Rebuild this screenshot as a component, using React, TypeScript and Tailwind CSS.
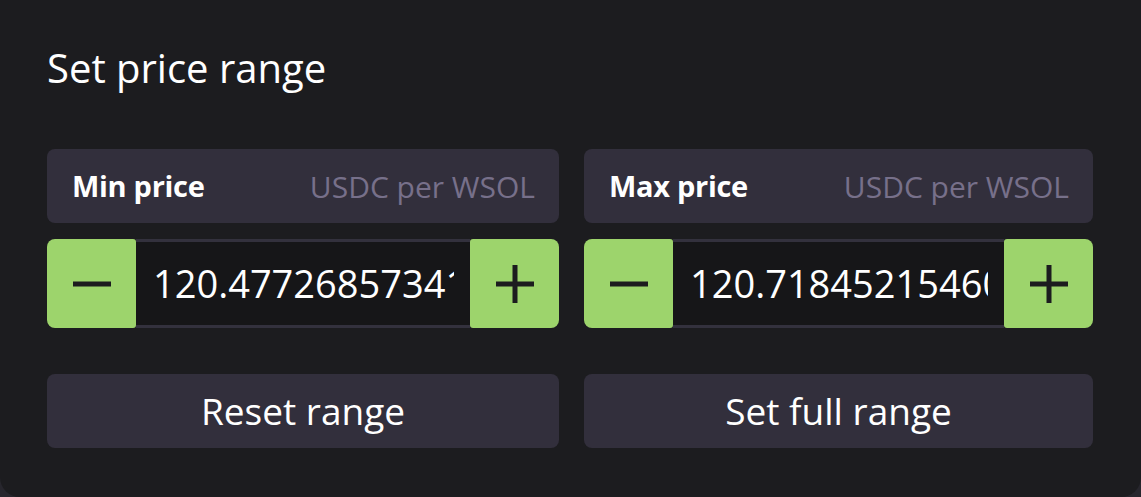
import { useState } from "react";

const font = { fontFamily: '"Open Sans", "Noto Sans", sans-serif' };

function Minus() {
  return (
    <svg width="40" height="40" viewBox="0 0 40 40">
      <rect x="1" y="17.5" width="38" height="5" fill="#1c1c1f" />
    </svg>
  );
}

function Plus() {
  return (
    <svg width="40" height="40" viewBox="0 0 40 40">
      <rect x="1" y="17.5" width="38" height="5" fill="#1c1c1f" />
      <rect x="17.5" y="1" width="5" height="38" fill="#1c1c1f" />
    </svg>
  );
}

function PriceInput({ label, value }: { label: string; value: string }) {
  const [val, setVal] = useState(value);
  return (
    <div className="flex min-w-0 flex-col">
      <div className="h-[74px] rounded-lg bg-[#322f3c] flex items-center justify-between pl-[25px] pr-[24px]">
        <span className="text-[29px] font-bold text-white tracking-[-0.3px]">{label}</span>
        <span className="text-[30px] text-[#77708a]">USDC per WSOL</span>
      </div>
      <div className="mt-[16px] flex h-[89px]">
        <button className="w-[89px] shrink-0 bg-[#9dd46c] rounded-l-lg rounded-r-[3px] flex items-center justify-center">
          <Minus />
        </button>
        <input
          value={val}
          size={1}
          onChange={(e) => setVal(e.target.value)}
          className="w-0 min-w-0 flex-1 bg-[#161618] border-y-[3px] border-[#33313d] pl-[17px] pr-[16px] text-[38px] text-white outline-none"
          style={font}
        />
        <button className="w-[89px] shrink-0 bg-[#9dd46c] rounded-r-lg rounded-l-[3px] flex items-center justify-center">
          <Plus />
        </button>
      </div>
    </div>
  );
}

export default function App() {
  return (
    <div className="w-[1141px] h-[497px] bg-[#27262d]" style={font}>
      <div className="h-full bg-[#1c1c1f] rounded-b-[20px] pl-[47px] pr-[48px] pt-[40px]">
        <h1 className="text-[40px] leading-[56px] text-white">Set price range</h1>
        <div className="mt-[53px] grid grid-cols-[512px_minmax(0,1fr)] gap-x-[25px]">
          <PriceInput label="Min price" value="120.47726857341234" />
          <PriceInput label="Max price" value="120.71845215460123" />
        </div>
        <div className="mt-[46px] grid grid-cols-[512px_minmax(0,1fr)] gap-x-[25px]">
          <button className="h-[74px] rounded-lg bg-[#322f3c] text-white text-[37px]">Reset range</button>
          <button className="h-[74px] rounded-lg bg-[#322f3c] text-white text-[37px]">Set full range</button>
        </div>
      </div>
    </div>
  );
}
